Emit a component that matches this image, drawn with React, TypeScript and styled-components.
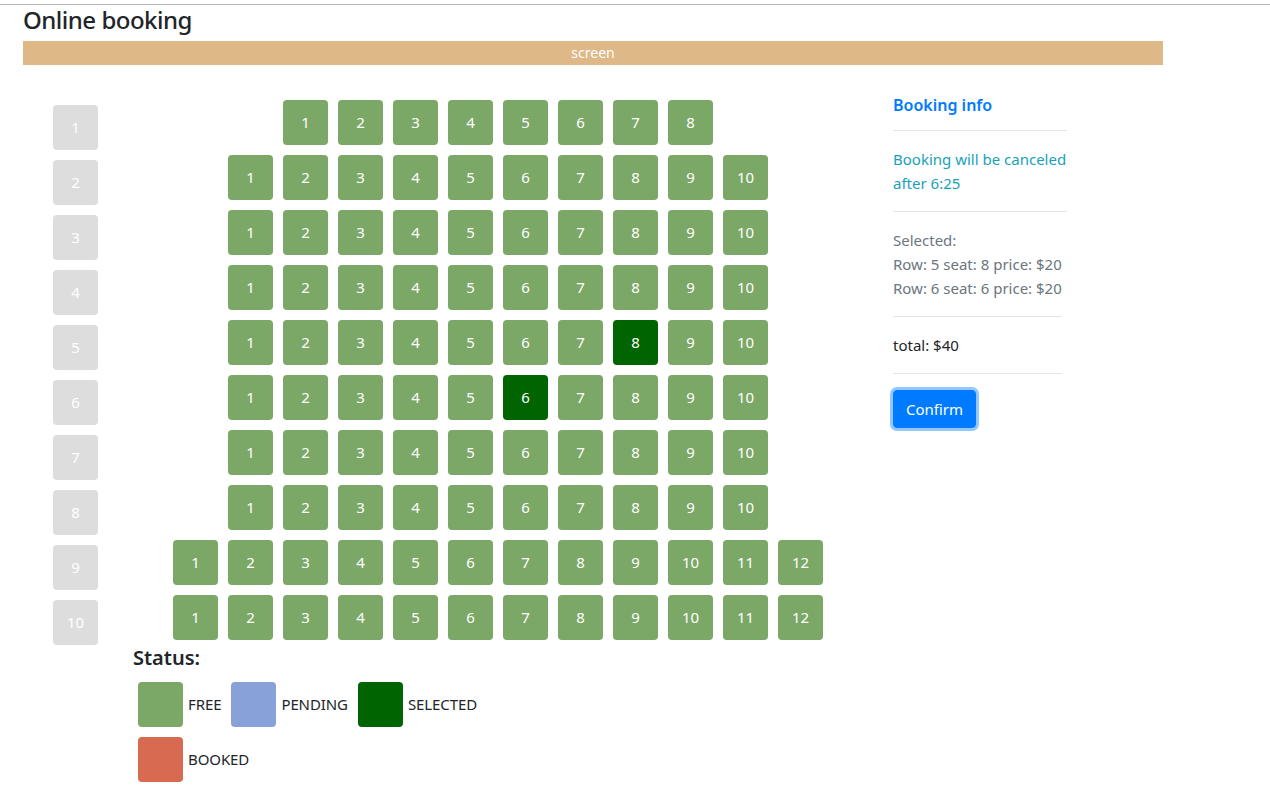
import React from "react";
import styled, { createGlobalStyle } from "styled-components";

const GlobalStyle = createGlobalStyle`
  html, body { margin: 0; padding: 0; background: #fff; }
  body {
    font-family: "Noto Sans", "Open Sans", Arial, sans-serif;
    font-size: 16px;
    line-height: 1.5;
    color: #212529;
  }
  * { box-sizing: border-box; }
`;

const TopRule = styled.div`
  margin-top: 4px;
  height: 1px;
  background: #b4b4b4;
`;

const Container = styled.div`
  width: 1140px;
  margin-left: 23px;
`;

const Title = styled.h2`
  margin: 1px 0 6px;
  font-size: 24px;
  font-weight: 500;
  line-height: 1.2;
  letter-spacing: -0.5px;
  color: #212529;
`;

const ScreenBar = styled.div`
  height: 24px;
  background: #deb887;
  color: #fff;
  font-size: 14px;
  line-height: 24px;
  text-align: center;
`;

const Main = styled.div`
  display: flex;
  align-items: flex-start;
  margin-top: 30px;
`;

const LabelsColumn = styled.div`
  display: flex;
  flex-direction: column;
  width: 45px;
  margin-left: 30px;
  padding-top: 5px;
`;

const Cell = styled.div<{ $bg: string }>`
  width: 45px;
  height: 45px;
  margin: 5px;
  border-radius: 4px;
  background: ${(p) => p.$bg};
  color: #fff;
  font-size: 15px;
  display: flex;
  align-items: center;
  justify-content: center;
  flex-shrink: 0;
`;

const RowLabel = styled(Cell)`
  margin: 5px 0;
`;

const SeatsColumn = styled.div`
  width: 760px;
  margin-left: 20px;
  padding: 0 15px;
`;

const SeatRow = styled.div`
  display: flex;
  justify-content: center;
`;

const StatusTitle = styled.h5`
  margin: 1px 0 7px;
  font-size: 20px;
  font-weight: 600;
  line-height: 1.2;
`;

const Legend = styled.div`
  display: flex;
  flex-wrap: wrap;
  width: 400px;
`;

const LegendItem = styled.div`
  display: flex;
  align-items: center;
`;

const LegendText = styled.span`
  margin-right: 5px;
  font-size: 15px;
  letter-spacing: -0.1px;
  color: #212529;
`;

const Panel = styled.div`
  width: 174px;
  margin-left: 15px;
`;

const PanelTitle = styled.h6`
  margin: 1px 0 -1px;
  font-size: 16px;
  font-weight: 600;
  line-height: 1.2;
  color: #007bff;
`;

const Rule = styled.hr<{ $w?: number }>`
  margin: 16px 0;
  border: 0;
  border-top: 1px solid rgba(0, 0, 0, 0.1);
  width: ${(p) => (p.$w ? `${p.$w}px` : "100%")};
`;

const Info = styled.p<{ $color: string }>`
  margin: 0;
  color: ${(p) => p.$color};
  font-size: 15px;
  line-height: 24px;
`;

const ConfirmButton = styled.button`
  font-family: inherit;
  font-size: 15px;
  line-height: 24px;
  padding: 6px 12px;
  color: #fff;
  background: #007bff;
  border: 1px solid #007bff;
  border-radius: 4px;
  box-shadow: 0 0 0 3px rgba(38, 143, 255, 0.5);
  cursor: pointer;
`;

const FREE = "#7ba767";
const SELECTED = "#006400";
const PENDING = "#88a1d8";
const BOOKED = "#d76a50";
const LABEL = "#dddddd";

const rows = [8, 10, 10, 10, 10, 10, 10, 10, 12, 12];
const selected: Record<number, number> = { 5: 8, 6: 6 };

const legend = [
  { color: FREE, text: "FREE" },
  { color: PENDING, text: "PENDING" },
  { color: SELECTED, text: "SELECTED" },
  { color: BOOKED, text: "BOOKED" },
];

export default function App() {
  return (
    <>
      <GlobalStyle />
      <TopRule />
      <Container>
        <Title>Online booking</Title>
        <ScreenBar>screen</ScreenBar>
        <Main>
          <LabelsColumn>
            {rows.map((_, i) => (
              <RowLabel key={i} $bg={LABEL}>
                {i + 1}
              </RowLabel>
            ))}
          </LabelsColumn>
          <SeatsColumn>
            {rows.map((count, r) => (
              <SeatRow key={r}>
                {Array.from({ length: count }, (_, s) => (
                  <Cell
                    key={s}
                    $bg={selected[r + 1] === s + 1 ? SELECTED : FREE}
                  >
                    {s + 1}
                  </Cell>
                ))}
              </SeatRow>
            ))}
            <StatusTitle>Status:</StatusTitle>
            <Legend>
              {legend.map((l) => (
                <LegendItem key={l.text}>
                  <Cell $bg={l.color} />
                  <LegendText>{l.text}</LegendText>
                </LegendItem>
              ))}
            </Legend>
          </SeatsColumn>
          <Panel>
            <PanelTitle>Booking info</PanelTitle>
            <Rule />
            <Info $color="#17a2b8">Booking will be canceled after 6:25</Info>
            <Rule />
            <Info $color="#6c757d">Selected:</Info>
            <Info $color="#6c757d">Row: 5 seat: 8 price: $20</Info>
            <Info $color="#6c757d">Row: 6 seat: 6 price: $20</Info>
            <Rule $w={169} />
            <Info $color="#212529">total: $40</Info>
            <Rule $w={169} />
            <ConfirmButton>Confirm</ConfirmButton>
          </Panel>
        </Main>
      </Container>
    </>
  );
}
